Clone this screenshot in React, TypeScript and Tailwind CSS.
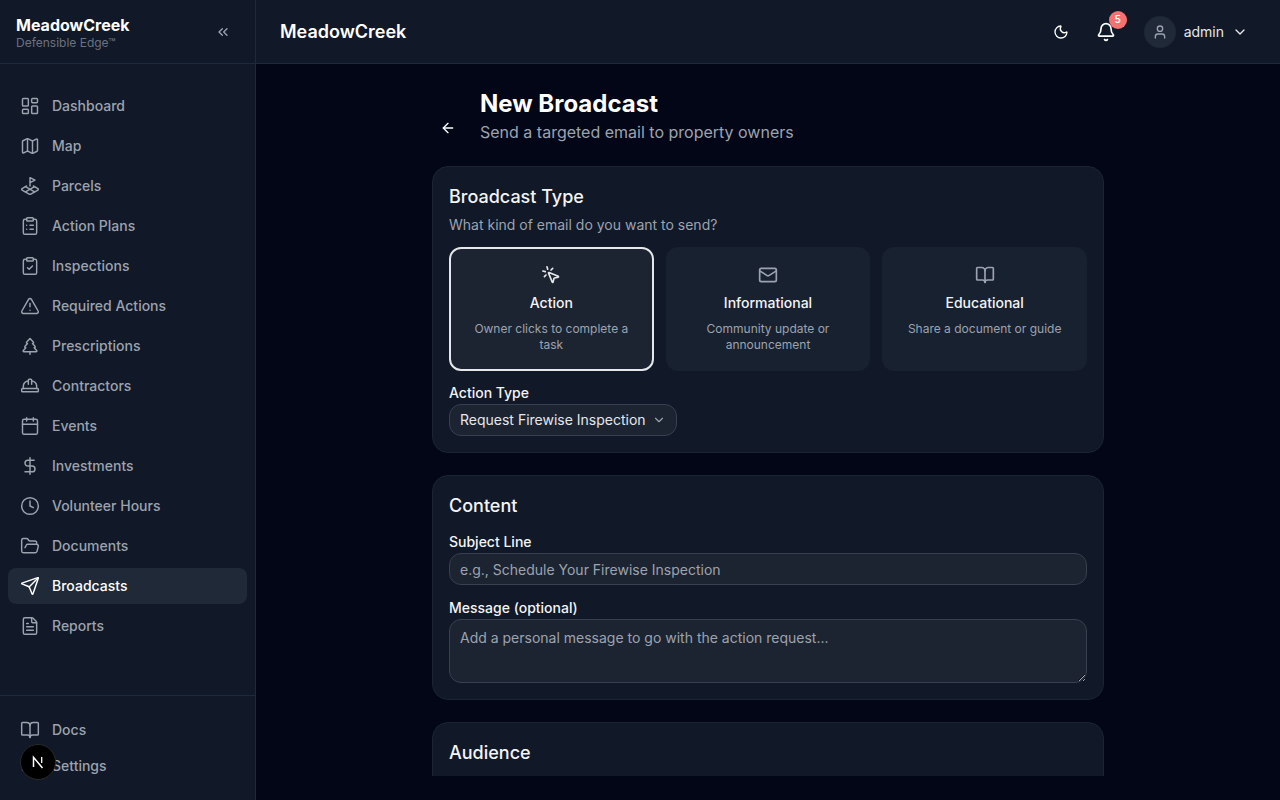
import {
  ArrowLeft,
  Bell,
  BookOpen,
  Calendar,
  ChevronDown,
  ChevronsLeft,
  ClipboardCheck,
  ClipboardList,
  Clock,
  DollarSign,
  FileText,
  FolderOpen,
  HardHat,
  LandPlot,
  LayoutDashboard,
  Mail,
  Map,
  Moon,
  MousePointerClick,
  Send,
  Settings,
  TreePine,
  TriangleAlert,
  User,
} from "lucide-react";

const NAV_ITEMS = [
  { label: "Dashboard", icon: LayoutDashboard },
  { label: "Map", icon: Map },
  { label: "Parcels", icon: LandPlot },
  { label: "Action Plans", icon: ClipboardList },
  { label: "Inspections", icon: ClipboardCheck },
  { label: "Required Actions", icon: TriangleAlert },
  { label: "Prescriptions", icon: TreePine },
  { label: "Contractors", icon: HardHat },
  { label: "Events", icon: Calendar },
  { label: "Investments", icon: DollarSign },
  { label: "Volunteer Hours", icon: Clock },
  { label: "Documents", icon: FolderOpen },
  { label: "Broadcasts", icon: Send, active: true },
  { label: "Reports", icon: FileText },
];

const TYPES = [
  { title: "Action", desc: "Owner clicks to complete a task", icon: MousePointerClick, active: true },
  { title: "Informational", desc: "Community update or announcement", icon: Mail },
  { title: "Educational", desc: "Share a document or guide", icon: BookOpen },
];

function Sidebar() {
  return (
    <aside className="relative flex h-full w-[256px] shrink-0 flex-col border-r border-[#1e293b] bg-[#111827]">
      <div className="flex h-[64px] shrink-0 items-center justify-between border-b border-[#1e293b] pl-4 pr-6">
        <div>
          <div className="text-base leading-[22px] font-bold text-white">MeadowCreek</div>
          <div className="text-xs leading-[14px] text-[#6b7280]">Defensible Edge™</div>
        </div>
        <ChevronsLeft size={16} className="text-[#9ca3af]" />
      </div>
      <nav className="flex flex-1 flex-col gap-1 px-2 py-6">
        {NAV_ITEMS.map((item) => (
          <div
            key={item.label}
            className={
              item.active
                ? "flex h-9 items-center gap-3 rounded-lg bg-[#1f2937] px-3 text-sm font-medium text-white"
                : "flex h-9 items-center gap-3 rounded-lg px-3 text-sm font-medium text-[#9ca3af]"
            }
          >
            <item.icon size={20} strokeWidth={1.75} />
            <span>{item.label}</span>
          </div>
        ))}
      </nav>
      <div className="border-t border-[#1e293b] px-2 py-4">
        <div className="flex h-9 items-center gap-3 px-3 text-sm font-medium text-[#9ca3af]">
          <BookOpen size={20} strokeWidth={1.75} />
          <span>Docs</span>
        </div>
        <div className="flex h-9 items-center gap-3 px-3 text-sm font-medium text-[#9ca3af]">
          <Settings size={20} strokeWidth={1.75} />
          <span>Settings</span>
        </div>
      </div>
      {/* next dev badge */}
      <div className="absolute bottom-[20px] left-[20px] flex h-9 w-9 items-center justify-center rounded-full border border-[#2a2a2a] bg-black">
        <svg width="16" height="16" viewBox="0 0 16 16" fill="none">
          <path d="M3.5 13V3.2L12.5 14" stroke="white" strokeWidth="1.5" />
          <path d="M11.7 3v6" stroke="white" strokeWidth="1.3" />
        </svg>
      </div>
    </aside>
  );
}

function Topbar() {
  return (
    <header className="flex h-[64px] shrink-0 items-center justify-between border-b border-[#1e293b] bg-[#111827] pl-6 pr-8">
      <div className="text-lg font-semibold text-white">MeadowCreek</div>
      <div className="flex items-center">
        <Moon size={16} className="text-white" />
        <div className="relative ml-[27px]">
          <Bell size={20} className="text-white" />
          <span className="absolute -right-[11px] -top-[11px] flex h-[18px] w-[18px] items-center justify-center rounded-full bg-[#f87171] text-[10px] font-semibold text-white">
            5
          </span>
        </div>
        <div className="ml-[28px] flex h-8 w-8 items-center justify-center rounded-full bg-[#1f2937]">
          <User size={16} className="text-[#9ca3af]" />
        </div>
        <span className="ml-[8px] text-sm text-[#e5e7eb]">admin</span>
        <ChevronDown size={16} className="ml-[8px] text-[#e5e7eb]" />
      </div>
    </header>
  );
}

function TypeCard({ title, desc, icon: Icon, active }: (typeof TYPES)[number]) {
  return (
    <div
      className={
        active
          ? "flex h-[124px] flex-col items-center rounded-xl border-2 border-[#e5e7eb] bg-[#1c2331] px-[14px] pt-[16px] text-center"
          : "flex h-[124px] flex-col items-center rounded-xl border-2 border-transparent bg-[#182130] px-[14px] pt-[16px] text-center"
      }
    >
      <Icon size={20} className={active ? "text-[#e5e7eb]" : "text-[#9ca3af]"} />
      <div className="mt-[8px] text-sm leading-5 font-medium text-[#f3f4f6]">{title}</div>
      <div className="mt-[8px] text-xs leading-4 text-[#9ca3af]">{desc}</div>
    </div>
  );
}

function BroadcastForm() {
  return (
    <div className="mx-auto flex w-[672px] flex-col gap-[22px] pt-6">
      <div className="flex items-center gap-4">
        <div className="flex h-8 w-8 items-center justify-center pt-[24px]">
          <ArrowLeft size={16} className="text-white" />
        </div>
        <div>
          <h1 className="text-2xl leading-8 font-bold text-white">New Broadcast</h1>
          <p className="text-base leading-6 text-[#9ca3af]">Send a targeted email to property owners</p>
        </div>
      </div>

      <section className="rounded-2xl border border-[#1b2433] bg-[#111827] p-4">
        <h2 className="text-lg leading-7 font-medium text-[#f3f4f6]">Broadcast Type</h2>
        <p className="mt-[4px] text-sm leading-5 text-[#9ca3af]">What kind of email do you want to send?</p>
        <div className="mt-[12px] grid grid-cols-3 gap-3">
          {TYPES.map((t) => (
            <TypeCard key={t.title} {...t} />
          ))}
        </div>
        <label className="mt-[12px] block text-sm leading-5 font-medium text-[#f3f4f6]">Action Type</label>
        <div className="mt-[1px] flex h-8 w-[228px] items-center justify-between rounded-xl border border-[#374151] bg-[#1c2331] px-[10px] text-sm text-[#e5e7eb]">
          <span>Request Firewise Inspection</span>
          <ChevronDown size={14} className="text-[#9ca3af]" />
        </div>
      </section>

      <section className="rounded-2xl border border-[#1b2433] bg-[#111827] p-4">
        <h2 className="text-lg leading-7 font-medium text-[#f3f4f6]">Content</h2>
        <label className="mt-[12px] block text-sm leading-5 font-medium text-[#f3f4f6]">Subject Line</label>
        <input
          placeholder="e.g., Schedule Your Firewise Inspection"
          className="mt-[1px] block h-8 w-full rounded-xl border border-[#374151] bg-[#1c2331] px-[10px] text-sm text-[#e5e7eb] placeholder:text-[#9ca3af]"
        />
        <label className="mt-[13px] block text-sm leading-5 font-medium text-[#f3f4f6]">Message (optional)</label>
        <textarea
          placeholder="Add a personal message to go with the action request..."
          className="mt-[1px] block h-16 w-full rounded-xl border border-[#374151] bg-[#1c2331] px-[10px] py-2 text-sm text-[#e5e7eb] placeholder:text-[#9ca3af]"
        />
      </section>

      <section className="rounded-2xl border border-[#1b2433] bg-[#111827] p-4">
        <h2 className="text-lg leading-7 font-medium text-[#f3f4f6]">Audience</h2>
        <div className="h-[200px]" />
      </section>
    </div>
  );
}

export default function App() {
  return (
    <div className="flex h-screen w-full overflow-hidden bg-[#020617] font-['Inter',sans-serif]">
      <Sidebar />
      <div className="flex min-w-0 flex-1 flex-col">
        <Topbar />
        <main className="mb-6 min-h-0 flex-1 overflow-hidden">
          <BroadcastForm />
        </main>
      </div>
    </div>
  );
}
